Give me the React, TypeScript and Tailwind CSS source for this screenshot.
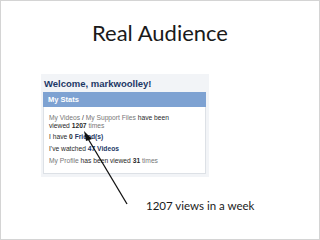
export default function App() {
  return (
    <div className="relative w-[320px] h-[240px] bg-white border border-[#d4d4d4] overflow-hidden">
      {/* slide title */}
      <h1 className="pt-[20px] text-center text-[22px] leading-[24px] text-[#1a1a1a] font-['Lato',sans-serif]">
        Real Audience
      </h1>

      {/* screenshot of the stats box */}
      <div className="ml-[40px] mt-[29px] w-[168px] h-[103px] bg-[#f2f4f7] px-[2px] pt-[2px] font-['Liberation_Sans',Arial,sans-serif]">
        <div className="pl-[1px] text-[9.5px] leading-[16px] font-bold text-[#1d3866]">
          Welcome, markwoolley!
        </div>
        <div className="w-[163px] h-[15px] bg-[#7ea2d2] pl-[5px] text-[7.5px] leading-[15px] font-bold text-white">
          My Stats
        </div>
        <div className="w-[163px] h-[67px] bg-white border border-t-0 border-[#dde1e6] pl-[5px] text-[6.7px] text-[#2a2a2a]">
          <p className="pt-[7px] leading-[8px]">
            <span className="text-[#777]">My Videos</span> / <span className="text-[#777]">My Support Files</span> have been
            <br />
            viewed <b>1207</b> <span className="text-[#777]">times</span>
          </p>
          <p className="mt-[3px] leading-[8px]">
            I have <b>0</b> <b className="text-[#1d3866]">Friend(s)</b>
          </p>
          <p className="mt-[4px] leading-[8px]">
            I've watched <b className="text-[#1d3866]">47 Videos</b>
          </p>
          <p className="mt-[4px] leading-[8px]">
            <span className="text-[#777]">My Profile</span> has been viewed <b>31</b> <span className="text-[#777]">times</span>
          </p>
        </div>
      </div>

      {/* caption */}
      <p className="ml-[145px] mt-[21px] text-[11.5px] leading-[16px] text-[#1a1a1a] font-['Lato',sans-serif]">
        1207 views in a week
      </p>

      {/* arrow over the screenshot */}
      <svg className="absolute inset-0 pointer-events-none" width="320" height="240" viewBox="0 0 320 240">
        <line x1="126" y1="203" x2="86" y2="136" stroke="#111" strokeWidth="1.3" />
        <polygon points="83,130 91,138 85,140" fill="#111" />
      </svg>
    </div>
  );
}
